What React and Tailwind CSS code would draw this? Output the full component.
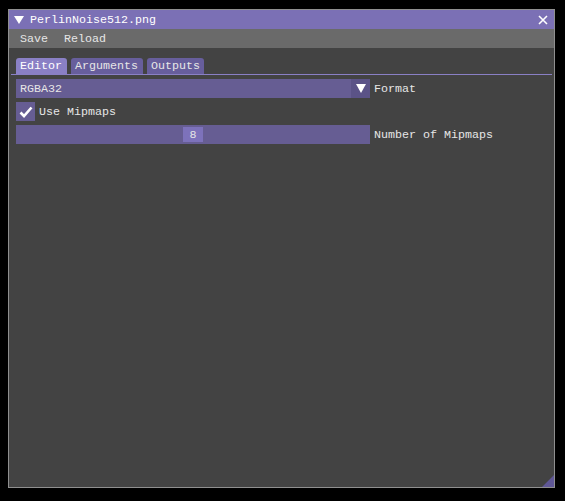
export default function App() {
  const font = { fontFamily: '"Liberation Mono", "DejaVu Sans Mono", monospace' };

  return (
    <div className="min-h-[501px] w-[565px] bg-black pt-[9px] pl-[8px]" style={font}>
      <div className="relative flex h-[479px] w-[547px] flex-col border border-[#8f8f8f] bg-[#434343] text-[11.67px] leading-[13px] text-[#e6e6e6]">
        {/* title bar */}
        <div className="flex h-[19px] items-center bg-[#7b70b5] pl-[5px] pr-[6px]">
          <svg width="10" height="8" viewBox="0 0 10 8" className="mr-[6px]">
            <polygon points="0,0 10,0 5,8" fill="#ffffff" />
          </svg>
          <span className="flex-1 translate-y-[1px] text-white">PerlinNoise512.png</span>
          <svg width="10" height="10" viewBox="0 0 10 10">
            <path d="M1 1 L9 9 M9 1 L1 9" stroke="#ffffff" strokeWidth="1.6" />
          </svg>
        </div>

        {/* menu bar */}
        <div className="flex h-[19px] items-center gap-[16px] bg-[#6a6a6a] pl-[11px]">
          <span className="translate-y-[1px]">Save</span>
          <span className="translate-y-[1px]">Reload</span>
        </div>

        {/* content */}
        <div className="flex flex-col px-[7px] pt-[10px]">
          <div className="flex gap-[4px]">
            <div className="h-[16px] w-[51px] rounded-t-[3px] bg-[#8a80c5] px-[4px] pt-[2px] text-white">Editor</div>
            <div className="h-[16px] w-[72px] rounded-t-[3px] bg-[#675e9c] px-[4px] pt-[2px]">Arguments</div>
            <div className="h-[16px] w-[57px] rounded-t-[3px] bg-[#675e9c] px-[4px] pt-[2px]">Outputs</div>
          </div>
          <div className="-mx-[5px] h-[1px] bg-[#8a80c5]" />

          <div className="mt-[4px] flex flex-col gap-[4px]">
            {/* combo */}
            <div className="flex items-center gap-[4px]">
              <div className="flex h-[19px] w-[354px] items-center bg-[#665d93]">
                <span className="flex-1 translate-y-[1px] pl-[4px]">RGBA32</span>
                <div className="flex h-[19px] w-[19px] items-center justify-center bg-[#5b5387]">
                  <svg width="10" height="9" viewBox="0 0 10 9">
                    <polygon points="0,0 10,0 5,9" fill="#ffffff" />
                  </svg>
                </div>
              </div>
              <span className="translate-y-[1px]">Format</span>
            </div>

            {/* checkbox */}
            <div className="flex items-center gap-[4px]">
              <div className="flex h-[19px] w-[19px] items-center justify-center bg-[#665d93]">
                <svg width="14" height="12" viewBox="0 0 14 12">
                  <path d="M1.5 6.5 L5 10 L12.5 1.5" fill="none" stroke="#ffffff" strokeWidth="2.6" />
                </svg>
              </div>
              <span className="translate-y-[1px]">Use Mipmaps</span>
            </div>

            {/* slider */}
            <div className="flex items-center gap-[4px]">
              <div className="relative flex h-[19px] w-[354px] items-center justify-center bg-[#665d93]">
                <div className="absolute left-[167px] top-[2px] h-[15px] w-[20px] bg-[#7d72bb]" />
                <span className="relative translate-y-[1px]">8</span>
              </div>
              <span className="translate-y-[1px]">Number of Mipmaps</span>
            </div>
          </div>
        </div>

        {/* resize grip */}
        <svg width="12" height="12" viewBox="0 0 12 12" className="absolute bottom-0 right-0">
          <polygon points="12,0 12,12 0,12" fill="#5f5796" />
        </svg>
      </div>
    </div>
  );
}
